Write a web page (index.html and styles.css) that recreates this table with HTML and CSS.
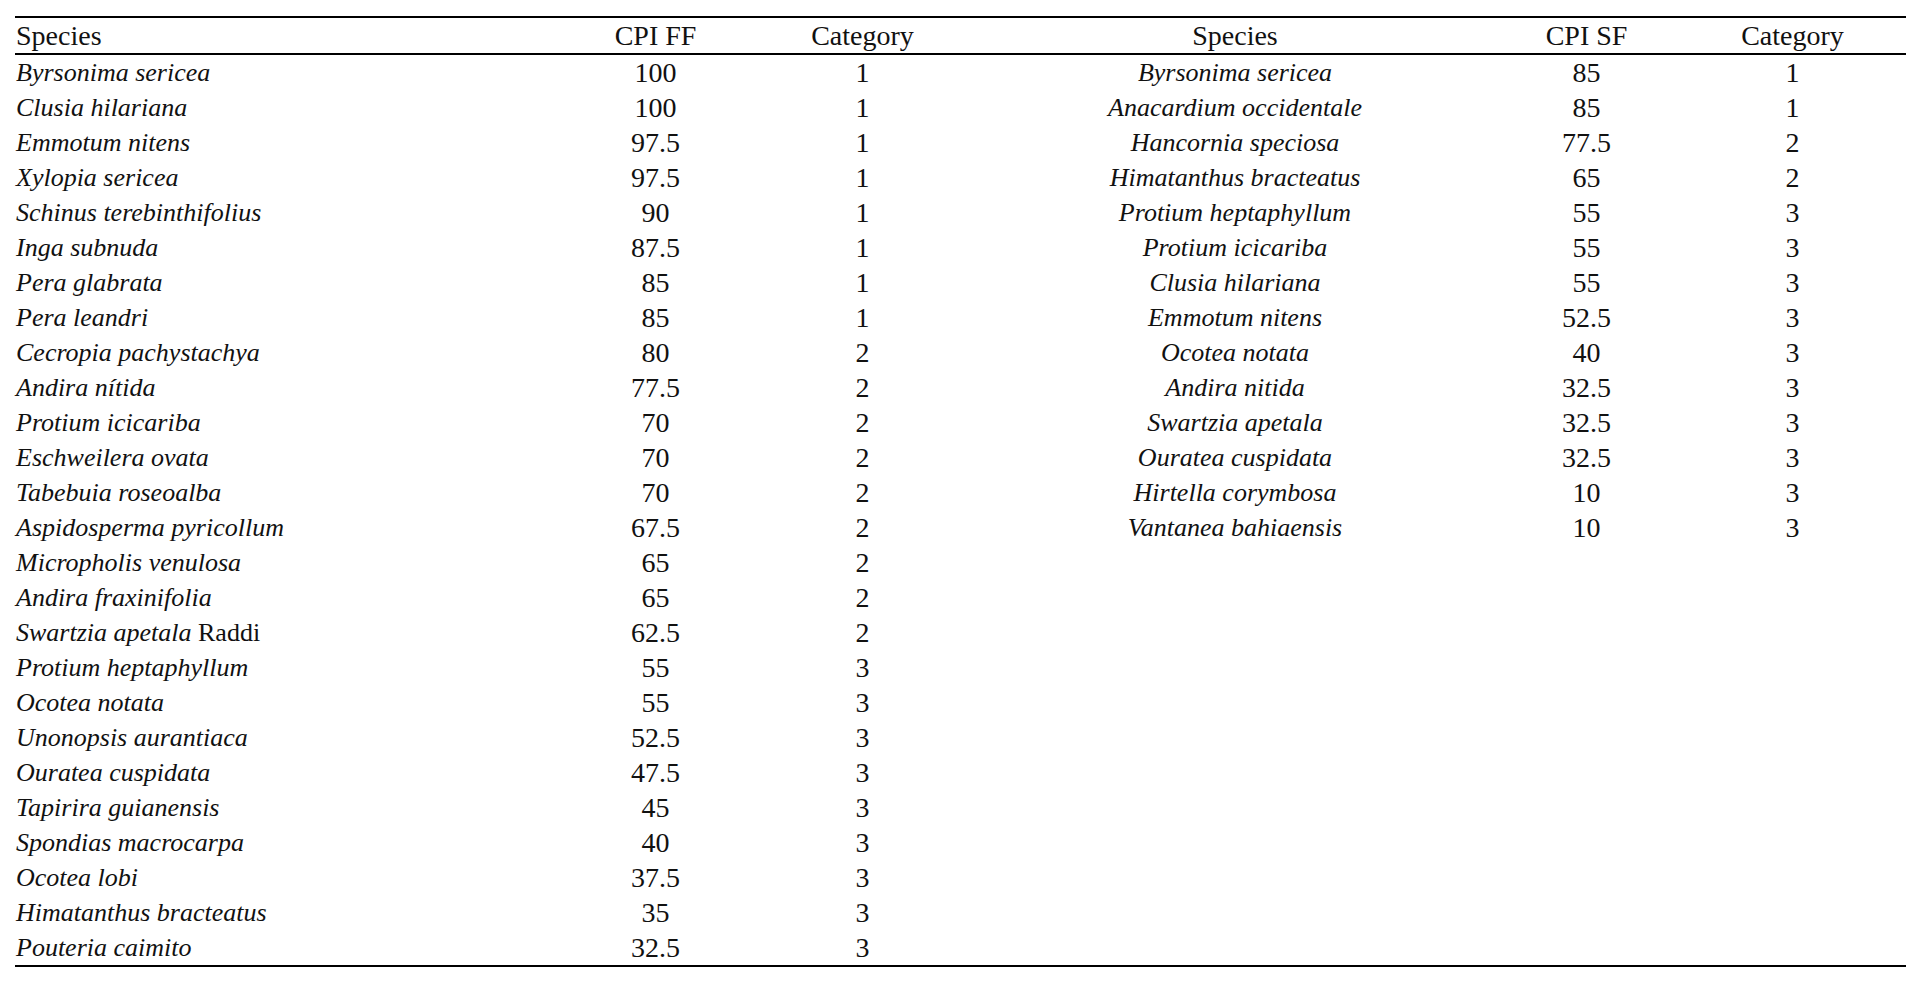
FILE: index.html
```html
<!DOCTYPE html>
<html lang="en">
<head>
<meta charset="utf-8">
<title>CPI table</title>
<link rel="stylesheet" href="styles.css">
</head>
<body>
<table class="cpi">
  <colgroup>
    <col class="c-sp1"><col class="c-num1"><col class="c-cat1">
    <col class="c-sp2"><col class="c-num2"><col class="c-cat2">
  </colgroup>
  <thead>
    <tr>
      <th class="left">Species</th><th>CPI FF</th><th>Category</th>
      <th>Species</th><th>CPI SF</th><th>Category</th>
    </tr>
  </thead>
  <tbody>
    <tr><td class="left sp">Byrsonima sericea</td><td>100</td><td>1</td><td class="sp">Byrsonima sericea</td><td>85</td><td>1</td></tr>
    <tr><td class="left sp">Clusia hilariana</td><td>100</td><td>1</td><td class="sp">Anacardium occidentale</td><td>85</td><td>1</td></tr>
    <tr><td class="left sp">Emmotum nitens</td><td>97.5</td><td>1</td><td class="sp">Hancornia speciosa</td><td>77.5</td><td>2</td></tr>
    <tr><td class="left sp">Xylopia sericea</td><td>97.5</td><td>1</td><td class="sp">Himatanthus bracteatus</td><td>65</td><td>2</td></tr>
    <tr><td class="left sp">Schinus terebinthifolius</td><td>90</td><td>1</td><td class="sp">Protium heptaphyllum</td><td>55</td><td>3</td></tr>
    <tr><td class="left sp">Inga subnuda</td><td>87.5</td><td>1</td><td class="sp">Protium icicariba</td><td>55</td><td>3</td></tr>
    <tr><td class="left sp">Pera glabrata</td><td>85</td><td>1</td><td class="sp">Clusia hilariana</td><td>55</td><td>3</td></tr>
    <tr><td class="left sp">Pera leandri</td><td>85</td><td>1</td><td class="sp">Emmotum nitens</td><td>52.5</td><td>3</td></tr>
    <tr><td class="left sp">Cecropia pachystachya</td><td>80</td><td>2</td><td class="sp">Ocotea notata</td><td>40</td><td>3</td></tr>
    <tr><td class="left sp">Andira nítida</td><td>77.5</td><td>2</td><td class="sp">Andira nitida</td><td>32.5</td><td>3</td></tr>
    <tr><td class="left sp">Protium icicariba</td><td>70</td><td>2</td><td class="sp">Swartzia apetala</td><td>32.5</td><td>3</td></tr>
    <tr><td class="left sp">Eschweilera ovata</td><td>70</td><td>2</td><td class="sp">Ouratea cuspidata</td><td>32.5</td><td>3</td></tr>
    <tr><td class="left sp">Tabebuia roseoalba</td><td>70</td><td>2</td><td class="sp">Hirtella corymbosa</td><td>10</td><td>3</td></tr>
    <tr><td class="left sp">Aspidosperma pyricollum</td><td>67.5</td><td>2</td><td class="sp">Vantanea bahiaensis</td><td>10</td><td>3</td></tr>
    <tr><td class="left sp">Micropholis venulosa</td><td>65</td><td>2</td><td></td><td></td><td></td></tr>
    <tr><td class="left sp">Andira fraxinifolia</td><td>65</td><td>2</td><td></td><td></td><td></td></tr>
    <tr><td class="left sp">Swartzia apetala <span class="auth">Raddi</span></td><td>62.5</td><td>2</td><td></td><td></td><td></td></tr>
    <tr><td class="left sp">Protium heptaphyllum</td><td>55</td><td>3</td><td></td><td></td><td></td></tr>
    <tr><td class="left sp">Ocotea notata</td><td>55</td><td>3</td><td></td><td></td><td></td></tr>
    <tr><td class="left sp">Unonopsis aurantiaca</td><td>52.5</td><td>3</td><td></td><td></td><td></td></tr>
    <tr><td class="left sp">Ouratea cuspidata</td><td>47.5</td><td>3</td><td></td><td></td><td></td></tr>
    <tr><td class="left sp">Tapirira guianensis</td><td>45</td><td>3</td><td></td><td></td><td></td></tr>
    <tr><td class="left sp">Spondias macrocarpa</td><td>40</td><td>3</td><td></td><td></td><td></td></tr>
    <tr><td class="left sp">Ocotea lobi</td><td>37.5</td><td>3</td><td></td><td></td><td></td></tr>
    <tr><td class="left sp">Himatanthus bracteatus</td><td>35</td><td>3</td><td></td><td></td><td></td></tr>
    <tr class="last"><td class="left sp">Pouteria caimito</td><td>32.5</td><td>3</td><td></td><td></td><td></td></tr>
  </tbody>
</table>
</body>
</html>
```

FILE: styles.css
```css
html, body {
  margin: 0;
  padding: 0;
  background: #ffffff;
}

body {
  padding: 16px 18px 0 15px;
  font-family: "Liberation Serif", "Times New Roman", serif;
  color: #111111;
}

.cpi {
  width: 1891px;
  border-collapse: collapse;
  table-layout: fixed;
  border-top: 2px solid #000;
  border-bottom: 2px solid #000;
}

.c-sp1 { width: 547px; }
.c-num1 { width: 187px; }
.c-cat1 { width: 227px; }
.c-sp2 { width: 518px; }
.c-num2 { width: 185px; }
.c-cat2 { width: 227px; }

.cpi th,
.cpi td {
  padding: 0;
  height: 35px;
  line-height: 35px;
  font-size: 28px;
  font-weight: normal;
  text-align: center;
  white-space: nowrap;
  vertical-align: middle;
}

.cpi thead th {
  border-bottom: 2px solid #000;
}

.cpi .left {
  text-align: left;
  padding-left: 1px;
}

.cpi .sp {
  font-style: italic;
  font-size: 26px;
}

.cpi .auth {
  font-style: normal;
}
```
